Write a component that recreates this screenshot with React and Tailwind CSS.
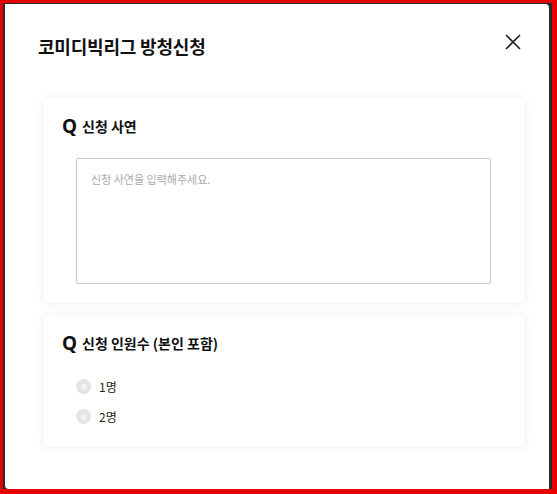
import React from "react";

export default function App() {
  const font = { fontFamily: '"Noto Sans CJK KR", "Noto Sans", sans-serif' };
  return (
    <div className="w-[557px] h-[494px] bg-[#e60000] pt-[3px] pl-[3px] pr-[5px] pb-[5px]" style={font}>
      <div className="w-full h-full bg-[#2a2a2a] pl-[2px] pt-[1px] pr-[3px]">
        <div className="w-full h-full bg-white rounded-tr-[4px] rounded-bl-[4px] relative flex flex-col">
          <div className="flex items-start justify-between pl-[33px] pr-[26px] pt-[30px]">
            <h1 className="text-[18px] font-bold text-[#111] leading-[24px] tracking-[-0.2px]">코미디빅리그 방청신청</h1>
            <button className="mt-[-2px] text-[#222]">
              <svg width="20" height="20" viewBox="0 0 20 20" fill="none" stroke="currentColor" strokeWidth="1.6">
                <path d="M3 3 L17 17 M17 3 L3 17" />
              </svg>
            </button>
          </div>
          <div className="ml-[39px] mr-[25px] mt-[40px] flex flex-col gap-[12px]">
            <div className="bg-white rounded-[4px] shadow-[0_0_10px_rgba(0,0,0,0.07)] pt-[17px] pb-[19px] pl-[18px]">
              <div className="flex items-center gap-[5px] text-[#111]">
                <span className="text-[19px] font-bold leading-[22px]" style={{ fontFamily: '"Noto Sans", sans-serif' }}>Q</span>
                <span className="text-[14px] font-bold leading-[22px]">신청 사연</span>
              </div>
              <textarea
                className="mt-[21px] ml-[14px] block w-[415px] h-[126px] border border-[#c8c8c8] rounded-[2px] px-[14px] py-[12px] text-[11px] text-[#333] placeholder-[#aaa] resize-none outline-none"
                placeholder="신청 사연을 입력해주세요."
                style={font}
              />
            </div>
            <div className="bg-white rounded-[4px] shadow-[0_0_10px_rgba(0,0,0,0.07)] pt-[17px] pb-[22px] pl-[18px]">
              <div className="flex items-center gap-[5px] text-[#111]">
                <span className="text-[19px] font-bold leading-[22px]" style={{ fontFamily: '"Noto Sans", sans-serif' }}>Q</span>
                <span className="text-[14px] font-bold leading-[22px]">신청 인원수 (본인 포함)</span>
              </div>
              <div className="mt-[24px] ml-[14px] flex flex-col gap-[13px]">
                {["1명", "2명"].map((t) => (
                  <label key={t} className="flex items-center gap-[8px] text-[12px] text-[#222] leading-[17px]">
                    <span className="w-[15px] h-[15px] rounded-full bg-[#e4e4e4] flex items-center justify-center">
                      <span className="w-[6px] h-[6px] rounded-full bg-[#f2f2f2]" />
                    </span>
                    {t}
                  </label>
                ))}
              </div>
            </div>
          </div>
        </div>
      </div>
    </div>
  );
}
